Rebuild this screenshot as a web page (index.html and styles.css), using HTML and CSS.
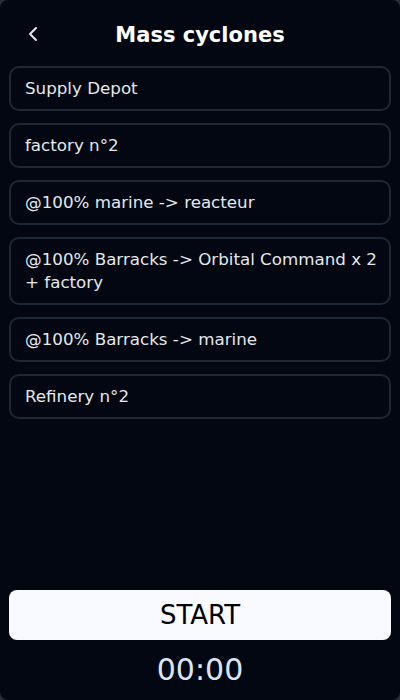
FILE: index.html
```html
<!DOCTYPE html>
<html>
<head>
<meta charset="utf-8">
<link rel="stylesheet" href="styles.css">
</head>
<body>
<div class="app">
  <header class="header">
    <button class="back" aria-label="Back">
      <svg width="12" height="16" viewBox="0 0 12 16"><path d="M9 2 L3 8 L9 14" fill="none" stroke="#e5e7eb" stroke-width="2" stroke-linecap="round" stroke-linejoin="round"/></svg>
    </button>
    <h1 class="title">Mass cyclones</h1>
  </header>
  <ul class="steps">
    <li class="step">Supply Depot</li>
    <li class="step">factory n°2</li>
    <li class="step">@100% marine -&gt; reacteur</li>
    <li class="step">@100% Barracks -&gt; Orbital Command x 2 + factory</li>
    <li class="step">@100% Barracks -&gt; marine</li>
    <li class="step">Refinery n°2</li>
  </ul>
  <div class="footer">
    <button class="start">START</button>
    <div class="timer">00:00</div>
  </div>
</div>
</body>
</html>
```
FILE: styles.css
```css
html, body {
  margin: 0;
  padding: 0;
  background: #2a2e36;
}
.app {
  width: 400px;
  height: 700px;
  box-sizing: border-box;
  background: #030712;
  border-radius: 8px;
  padding: 0 9px;
  display: flex;
  flex-direction: column;
  font-family: "DejaVu Sans", sans-serif;
  color: #e5e7eb;
}
.header {
  height: 66px;
  display: flex;
  align-items: center;
  justify-content: center;
  position: relative;
  padding-top: 4px;
  box-sizing: border-box;
}
.back {
  position: absolute;
  left: 18px;
  top: 26px;
  background: none;
  border: 0;
  padding: 0;
  width: 12px;
  height: 16px;
  display: flex;
}
.title {
  margin: 0;
  font-size: 21px;
  font-weight: 700;
  color: #ffffff;
}
.steps {
  list-style: none;
  margin: 0;
  padding: 0;
  display: flex;
  flex-direction: column;
  gap: 12px;
}
.step {
  border: 2px solid #1f2734;
  border-radius: 10px;
  padding: 9px 6px 9px 14px;
  font-size: 16.7px;
  line-height: 23px;
}
.footer {
  margin-top: auto;
  display: flex;
  flex-direction: column;
  align-items: stretch;
  padding-bottom: 8px;
}
.start {
  height: 50px;
  border: 0;
  border-radius: 8px;
  background: #f8faff;
  color: #000;
  font-family: "DejaVu Sans", sans-serif;
  font-size: 26px;
  padding: 0;
}
.timer {
  text-align: center;
  font-size: 30px;
  line-height: 44px;
  margin-top: 8px;
  color: #dbe4f3;
}
```
